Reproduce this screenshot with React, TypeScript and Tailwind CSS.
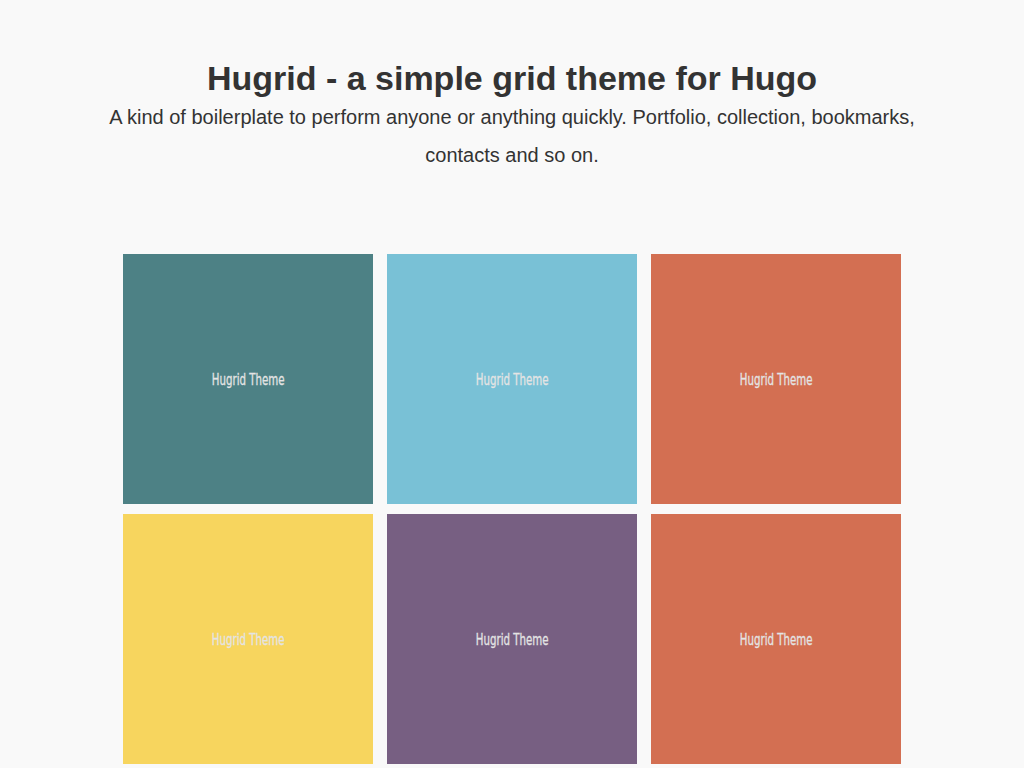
const tiles = [
  { bg: 'bg-[#4d8185]' },
  { bg: 'bg-[#79c1d6]' },
  { bg: 'bg-[#d36f52]' },
  { bg: 'bg-[#f7d55e]' },
  { bg: 'bg-[#775f82]' },
  { bg: 'bg-[#d36f52]' },
];

export default function App() {
  return (
    <div className="min-h-[768px] bg-[#f9f9f9] font-['Liberation_Sans',Arial,sans-serif] text-[#333]">
      <header className="pt-[58px] text-center">
        <h1 className="text-[34px] font-bold leading-[40px]">Hugrid - a simple grid theme for Hugo</h1>
        <p className="mx-auto max-w-[830px] text-[20px] leading-[38px]">
          A kind of boilerplate to perform anyone or anything quickly. Portfolio, collection, bookmarks, contacts and so on.
        </p>
      </header>

      <main className="mx-auto mt-[80px] grid w-[778px] grid-cols-[250px_250px_250px] gap-x-[14px] gap-y-[10px]">
        {tiles.map((t, i) => (
          <div key={i} className={`${t.bg} flex h-[250px] items-center justify-center pt-[2px]`}>
            <span className="inline-block scale-x-[0.71] font-['DejaVu_Sans_Condensed','DejaVu_Sans',sans-serif] text-[16px] font-normal text-[#e4e4e4] [font-stretch:condensed] [-webkit-text-stroke:0.3px_#e4e4e4]">
              Hugrid Theme
            </span>
          </div>
        ))}
      </main>
    </div>
  );
}
